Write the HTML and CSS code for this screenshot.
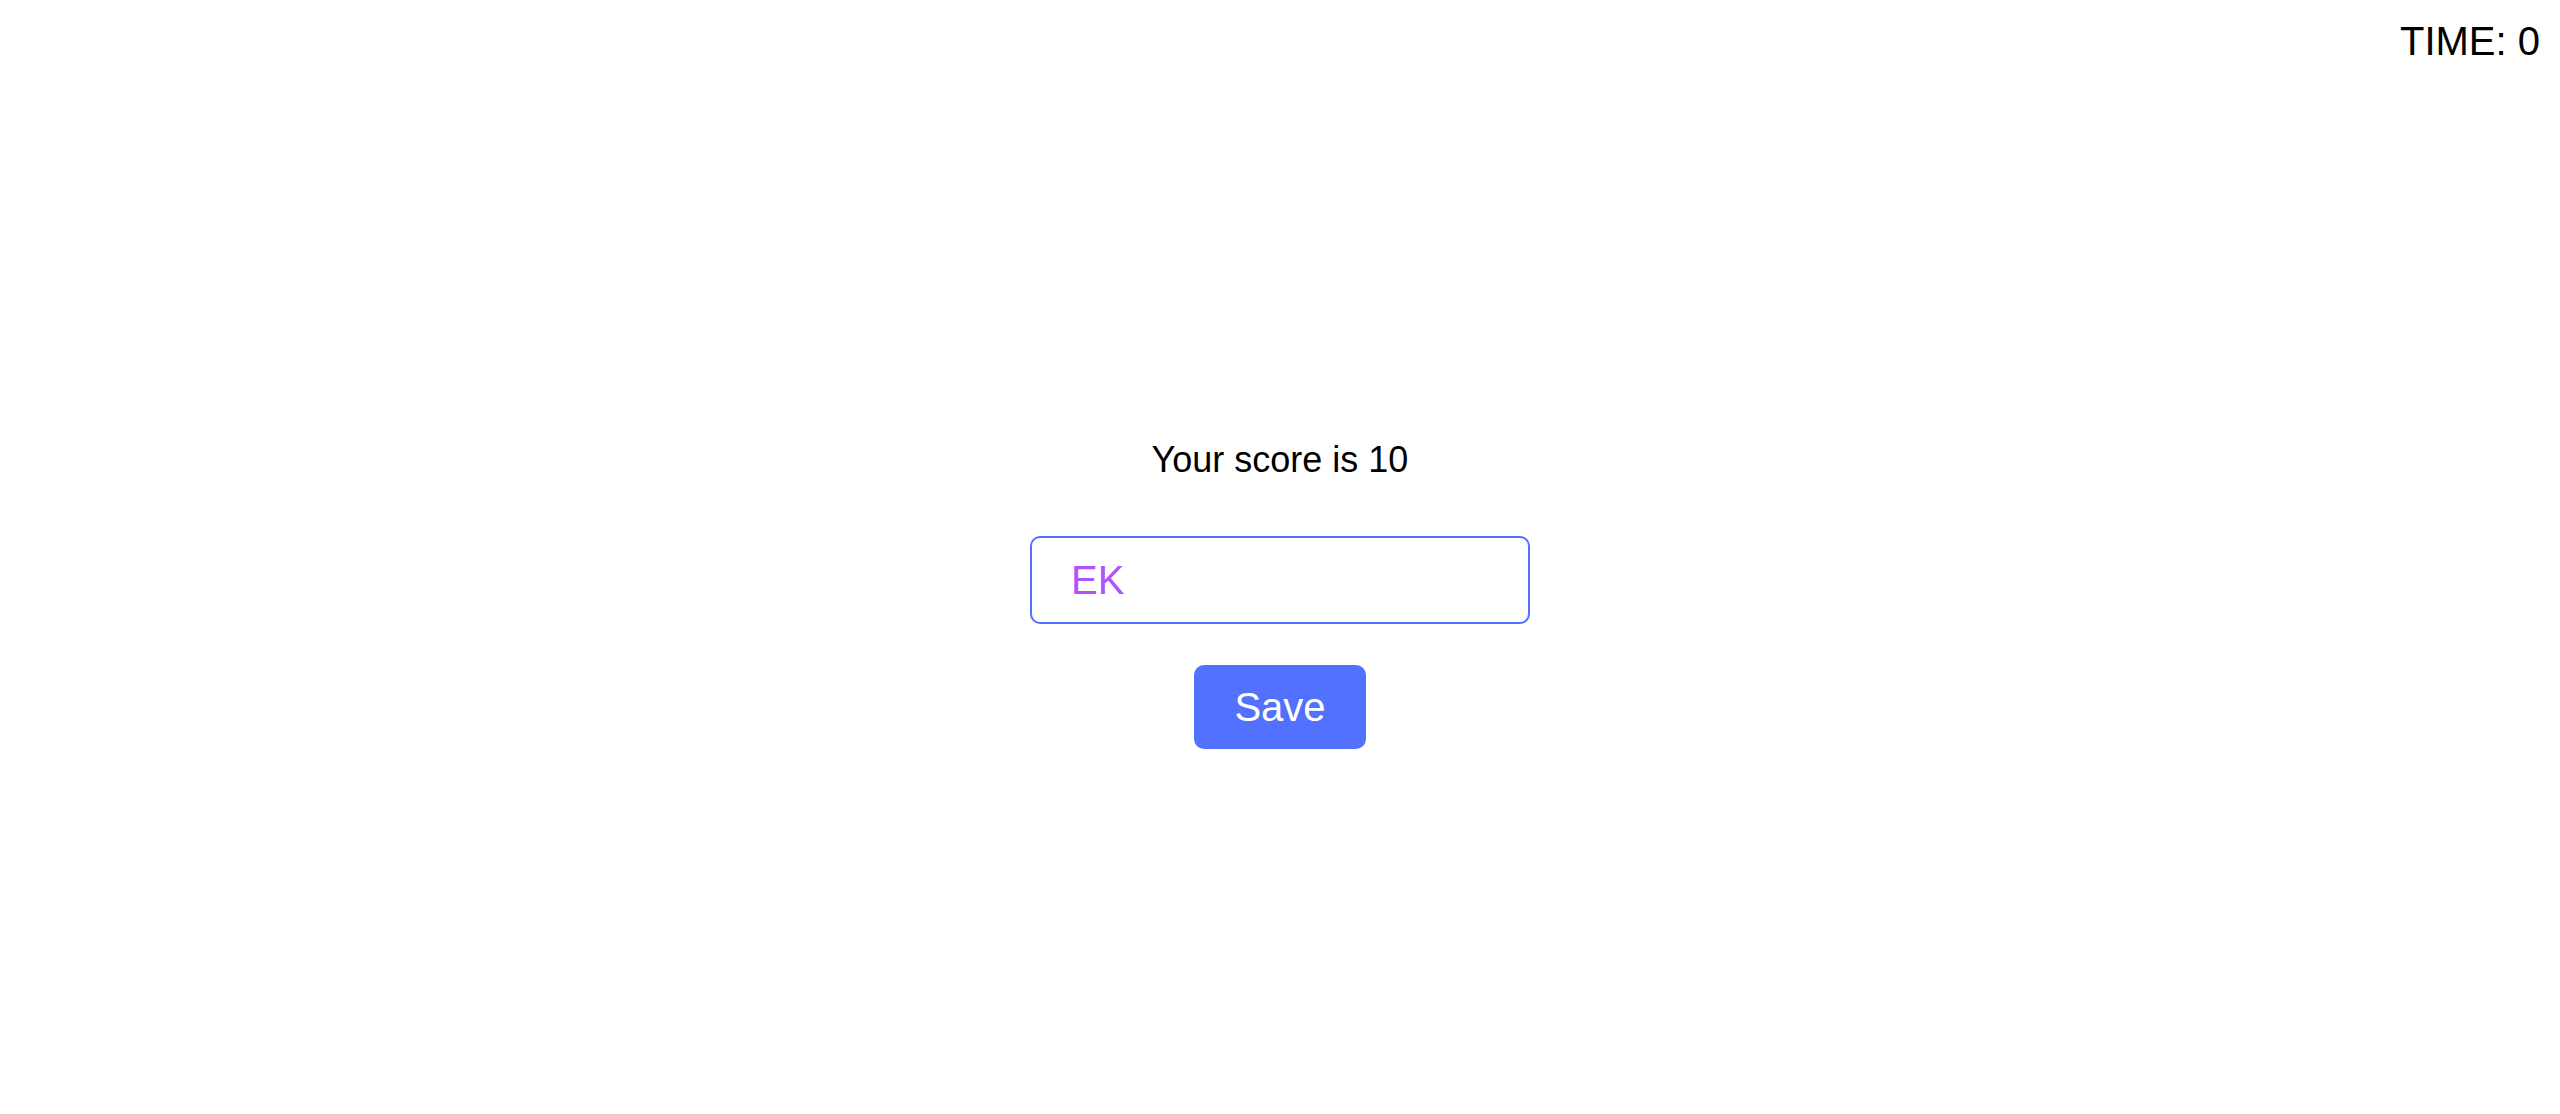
FILE: index.html
```html
<!DOCTYPE html>
<html lang="en">
<head>
<meta charset="utf-8">
<title>Score</title>
<link rel="stylesheet" href="styles.css">
</head>
<body>
<header class="topbar">
  <div class="timer">TIME: 0</div>
</header>
<main class="result">
  <p class="score">Your score is 10</p>
  <form class="save-form">
    <input class="initials" type="text" value="EK">
    <button class="save-btn" type="button">Save</button>
  </form>
</main>
</body>
</html>
```
FILE: styles.css
```css
html, body {
  margin: 0;
  padding: 0;
  background: #ffffff;
  font-family: "Liberation Sans", Arial, sans-serif;
  color: #000000;
}

.topbar {
  display: flex;
  justify-content: flex-end;
  padding: 19px 20px 0 0;
}

.timer {
  font-size: 40px;
  line-height: normal;
}

.result {
  display: flex;
  flex-direction: column;
  align-items: center;
  padding-top: 375px;
}

.score {
  margin: 0;
  font-size: 36px;
  line-height: normal;
}

.save-form {
  display: flex;
  flex-direction: column;
  align-items: center;
  margin-top: 55px;
}

.initials {
  box-sizing: border-box;
  width: 500px;
  height: 88px;
  margin: 0;
  padding: 0 0 0 39px;
  border: 2px solid #5271ff;
  border-radius: 10px;
  outline: none;
  background: #ffffff;
  font-family: "Liberation Sans", Arial, sans-serif;
  font-size: 40px;
  color: #b052ff;
}

.save-btn {
  box-sizing: border-box;
  height: 84px;
  width: 172px;
  margin-top: 41px;
  padding: 0;
  border: none;
  border-radius: 10px;
  background: #5271ff;
  color: #ffffff;
  font-family: "Liberation Sans", Arial, sans-serif;
  font-size: 40px;
  cursor: pointer;
}
```
